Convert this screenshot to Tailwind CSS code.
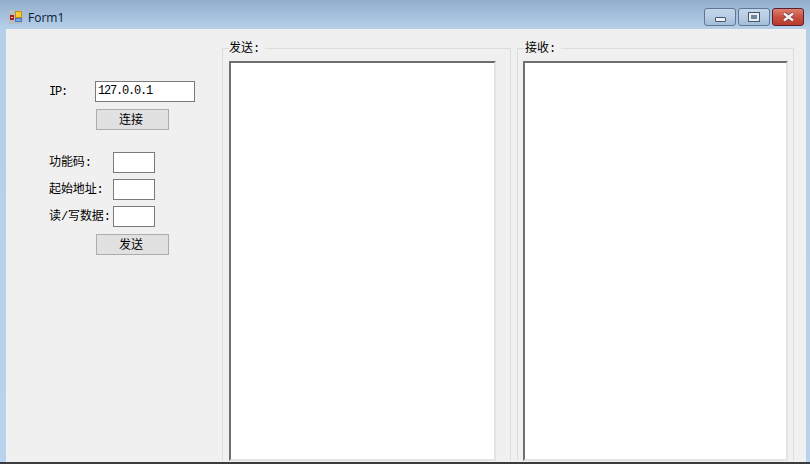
<!DOCTYPE html>
<html>
  <head>
    <meta charset="utf-8">
    <script src="https://cdn.jsdelivr.net/npm/@tailwindcss/browser@4"></script>
  </head>

  <body>
    <div class="w-[810px] h-[464px] overflow-hidden flex flex-col bg-gradient-to-b from-[#90adcc] via-[#b5cfe9] via-[6%] to-[#b9d3ee] font-['Liberation_Mono','Noto_Sans_CJK_SC',monospace] text-[12px] text-black">
      <!-- title bar -->
      <div class="h-[29px] shrink-0 flex items-start">
        <svg class="ml-[9px] mt-[10px] shrink-0" width="14" height="14" viewBox="0 0 14 14">
          <rect x="0" y="0" width="14" height="14" fill="#b4bfca"/>
          <rect x="1" y="5" width="4" height="5" fill="#b3181a"/>
          <rect x="2" y="7" width="2" height="1" fill="#f6d8d0"/>
          <rect x="6.5" y="1.5" width="6" height="6" fill="#f7cb33" stroke="#c08a12" stroke-width="1"/>
          <rect x="6.5" y="8.5" width="6" height="3" fill="#7fa9e6" stroke="#4b77c0" stroke-width="1"/>
        </svg>
        <span class="ml-[5px] mt-[9px] font-['Open_Sans',sans-serif] text-[12px] leading-[18px] text-[#0b1a33]">Form1</span>
        <div class="ml-auto mr-[6px] mt-[8px] flex gap-[2px]">
          <div class="w-[32px] h-[18px] rounded-[3px] border border-[#5f7896] bg-gradient-to-b from-[#c4d7ea] via-[#b7cde3] via-50% to-[#a3bdd8] flex items-end justify-center pb-[3px]">
            <div class="w-[11px] h-[5px] rounded-[1px] bg-[#eef1f5] border border-[#47566c]"></div>
          </div>
          <div class="w-[32px] h-[18px] rounded-[3px] border border-[#5f7896] bg-gradient-to-b from-[#c4d7ea] via-[#b7cde3] via-50% to-[#a3bdd8] flex items-center justify-center">
            <div class="w-[10px] h-[8px] border-2 border-[#e9edf2] outline outline-1 outline-[#47566c] bg-[#6f86a3]"></div>
          </div>
          <div class="w-[32px] h-[18px] rounded-[3px] border border-[#5a2030] bg-gradient-to-b from-[#dd7f6f] via-[#c9503f] via-50% to-[#b83a2c] flex items-center justify-center">
            <svg width="13" height="10" viewBox="0 0 13 10">
              <path d="M2 1.5 L11 8.5 M11 1.5 L2 8.5" stroke="#6a3a40" stroke-width="4"/>
              <path d="M2 1.5 L11 8.5 M11 1.5 L2 8.5" stroke="#f3eeee" stroke-width="2.6"/>
            </svg>
          </div>
        </div>
      </div>

      <!-- client area -->
      <div class="flex-1 min-h-0 ml-[6px] mr-[4px] bg-[#f0f0f0] flex">
        <!-- controls -->
        <div class="w-[216px] shrink-0 pt-[52px] pl-[43px] flex flex-col">
          <div class="flex items-center h-[21px]">
            <span class="w-[46px] tracking-[-1.2px]">IP:</span>
            <input value="127.0.0.1" readonly class="w-[100px] h-[21px] bg-white border border-[#7a7a7a] pl-[2px] tracking-[-1.2px] pb-[2px] outline-none">
          </div>
          <button class="ml-[47px] mt-[7px] w-[73px] h-[21px] pr-[3px] pt-[3px] bg-[#e1e1e1] border border-[#adadad] text-[12px] leading-none">连接</button>
          <div class="mt-[22px] flex flex-col gap-[6px]">
            <div class="flex items-center h-[21px]">
              <span class="w-[64px] tracking-[-0.1px]">功能码:</span>
              <input class="w-[42px] h-[21px] bg-white border border-[#7a7a7a] outline-none">
            </div>
            <div class="flex items-center h-[21px]">
              <span class="w-[64px] tracking-[-0.1px]">起始地址:</span>
              <input class="w-[42px] h-[21px] bg-white border border-[#7a7a7a] outline-none">
            </div>
            <div class="flex items-center h-[21px]">
              <span class="w-[64px] whitespace-nowrap tracking-[-0.1px]">读/写数据:</span>
              <input class="w-[42px] h-[21px] bg-white border border-[#7a7a7a] outline-none">
            </div>
          </div>
          <button class="ml-[47px] mt-[7px] w-[73px] h-[21px] pr-[3px] pt-[3px] bg-[#e1e1e1] border border-[#adadad] text-[12px] leading-none">发送</button>
        </div>

        <!-- send group -->
        <fieldset class="w-[289px] shrink-0 h-[421px] mt-[10px] border border-[#dcdcdc] border-b-0 pl-[6px] min-w-0">
          <legend class="pr-[5px] pt-[2px] text-[12px] leading-[16px]">发送:</legend>
          <div class="mt-[4px] w-[267px] h-[400px] bg-white border-2 border-[#6f6f6f] border-r-[#e3e3e3] border-b-[#e3e3e3]"></div>
        </fieldset>

        <!-- receive group -->
        <fieldset class="ml-[6px] w-[277px] shrink-0 h-[421px] mt-[10px] border border-[#dcdcdc] border-b-0 pl-[5px] min-w-0">
          <legend class="ml-[2px] pr-[5px] pt-[2px] text-[12px] leading-[16px]">接收:</legend>
          <div class="mt-[4px] w-[265px] h-[400px] bg-white border-2 border-[#6f6f6f] border-r-[#e3e3e3] border-b-[#e3e3e3]"></div>
        </fieldset>
      </div>

      <div class="h-[2px] shrink-0 bg-[#3a3c40]"></div>
    </div>
  </body>
</html>
